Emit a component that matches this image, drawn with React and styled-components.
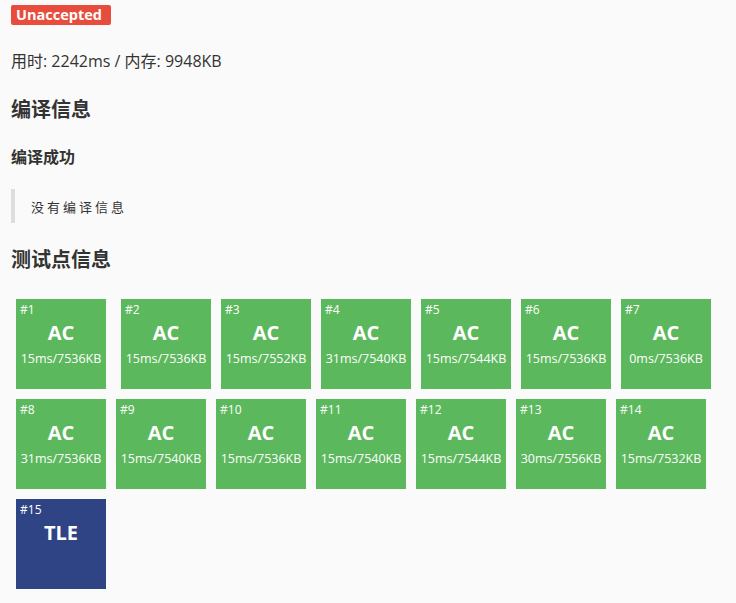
import React from 'react'
import styled, { createGlobalStyle } from 'styled-components'

const GlobalStyle = createGlobalStyle`
  body {
    margin: 0;
    background: #fafafa;
    font-family: "Open Sans", "Noto Sans CJK SC", sans-serif;
    color: #333;
  }
`

const Page = styled.div`
  padding: 5px 11px 0;
`

const Badge = styled.span`
  display: block;
  width: 100px;
  height: 20px;
  box-sizing: border-box;
  padding-left: 5px;
  background: #e74c3c;
  border-radius: 2px;
  color: #fff;
  font-size: 14.5px;
  font-weight: 700;
  line-height: 20px;
`

const Stats = styled.p`
  margin: 25px 0 0;
  font-size: 16px;
  line-height: 22px;
`

const Heading = styled.h3`
  margin: ${p => p.$top}px 0 0;
  font-size: 20px;
  font-weight: 700;
  line-height: 28px;
`

const SubHeading = styled.h4`
  margin: 21px 0 0;
  font-size: 16px;
  font-weight: 700;
  line-height: 24px;
`

const Quote = styled.blockquote`
  margin: 20px 0 0;
  padding: 0 0 0 16px;
  height: 34px;
  border-left: 4px solid #ddd;
  display: flex;
  align-items: center;
  font-family: "Liberation Serif", "Noto Sans CJK SC", serif;
  font-size: 13px;
  letter-spacing: 3px;
  color: #333;
`

const Grid = styled.div`
  margin: 25px 0 0 5px;
  display: flex;
  flex-direction: column;
  gap: 10px;
`

const Row = styled.div`
  display: flex;
  gap: 10px;
`

const Case = styled.div`
  position: relative;
  width: 90px;
  height: 90px;
  margin-right: ${p => (p.$wide ? 5 : 0)}px;
  background: ${p => (p.$status === 'TLE' ? '#2e4485' : '#5cb85c')};
  color: #fff;
  text-align: center;
  font-family: "Open Sans", sans-serif;
`

const CaseNo = styled.span`
  position: absolute;
  left: 4px;
  top: 2px;
  font-size: 12px;
`

const Verdict = styled.div`
  padding-top: 20px;
  font-size: 20px;
  font-weight: 700;
  line-height: 28px;
`

const Usage = styled.div`
  margin-top: 4px;
  font-size: 12.5px;
  line-height: 16px;
`

const cases = [
  ['AC', '15ms/7536KB'],
  ['AC', '15ms/7536KB'],
  ['AC', '15ms/7552KB'],
  ['AC', '31ms/7540KB'],
  ['AC', '15ms/7544KB'],
  ['AC', '15ms/7536KB'],
  ['AC', '0ms/7536KB'],
  ['AC', '31ms/7536KB'],
  ['AC', '15ms/7540KB'],
  ['AC', '15ms/7536KB'],
  ['AC', '15ms/7540KB'],
  ['AC', '15ms/7544KB'],
  ['AC', '30ms/7556KB'],
  ['AC', '15ms/7532KB'],
  ['TLE', ''],
]

const rows = [cases.slice(0, 7), cases.slice(7, 14), cases.slice(14)]

export default function App() {
  let n = 0
  return (
    <>
      <GlobalStyle />
      <Page>
        <Badge>Unaccepted</Badge>
        <Stats>用时: 2242ms / 内存: 9948KB</Stats>
        <Heading $top={24}>编译信息</Heading>
        <SubHeading>编译成功</SubHeading>
        <Quote>没有编译信息</Quote>
        <Heading $top={23}>测试点信息</Heading>
        <Grid>
          {rows.map((row, r) => (
            <Row key={r}>
              {row.map(([status, usage], i) => {
                n += 1
                return (
                  <Case key={n} $status={status} $wide={r === 0 && i === 0}>
                    <CaseNo>#{n}</CaseNo>
                    <Verdict>{status}</Verdict>
                    {usage && <Usage>{usage}</Usage>}
                  </Case>
                )
              })}
            </Row>
          ))}
        </Grid>
      </Page>
    </>
  )
}
